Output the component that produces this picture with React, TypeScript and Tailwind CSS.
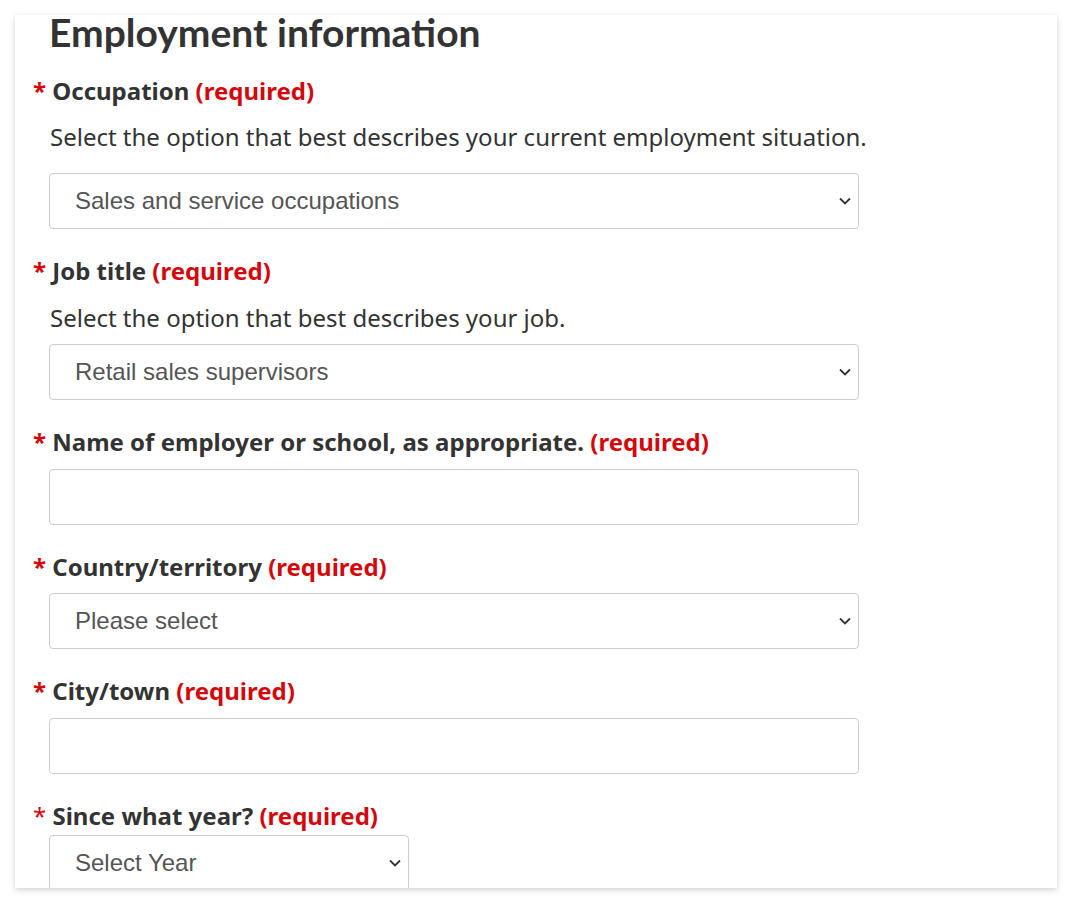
const Chevron = () => (
    <svg width="12" height="8" viewBox="0 0 12 8" className="pointer-events-none absolute right-[8px] top-[24px]">
        <path d="M1 1.5 L6 6.5 L11 1.5" fill="none" stroke="#333" strokeWidth="1.8" />
    </svg>
);

function Label({ text }: { text: string }) {
    return (
        <div className="-ml-[16px] text-[24px] leading-[32px] font-bold text-[#333]">
            <span className="text-[#d3080c]">*</span> {text}{' '}
            <span className="text-[#d3080c]">(required)</span>
        </div>
    );
}

function SelectBox({ value, width = 'w-[810px]' }: { value: string; width?: string }) {
    return (
        <div className={`relative ${width}`}>
            <select
                className="h-[56px] w-full appearance-none rounded-[4px] border border-[#ccc] bg-white pl-[25px] text-[24px] text-[#555]"
                style={{ fontFamily: '"Liberation Sans", Arial, sans-serif' }}
                defaultValue={value}
            >
                <option>{value}</option>
            </select>
            <Chevron />
        </div>
    );
}

function TextBox() {
    return <input type="text" className="h-[56px] w-[810px] rounded-[4px] border border-[#ccc] bg-white" />;
}

export default function App() {
    return (
        <div className="min-h-[903px] bg-white pt-[15px]" style={{ fontFamily: '"Noto Sans", "Open Sans", sans-serif' }}>
            <div className="mx-[15px] w-[1042px] bg-white pl-[34px] shadow-[0_2px_6px_rgba(0,0,0,0.18)]">
                <h2
                    className="text-[39px] leading-[34px] font-bold text-[#333]"
                    style={{ fontFamily: 'Lato, sans-serif' }}
                >
                    Employment information
                </h2>

                <div className="mt-[26px]">
                    <Label text="Occupation" />
                    <p className="mt-[14px] ml-px text-[24px] leading-[32px] text-[#333]">
                        Select the option that best describes your current employment situation.
                    </p>
                    <div className="mt-[20px]">
                        <SelectBox value="Sales and service occupations" />
                    </div>
                </div>

                <div className="mt-[26px]">
                    <Label text="Job title" />
                    <p className="mt-[15px] ml-px text-[24px] leading-[32px] text-[#333]">
                        Select the option that best describes your job.
                    </p>
                    <div className="mt-[10px]">
                        <SelectBox value="Retail sales supervisors" />
                    </div>
                </div>

                <div className="mt-[26px]">
                    <Label text="Name of employer or school, as appropriate." />
                    <div className="mt-[11px]">
                        <TextBox />
                    </div>
                </div>

                <div className="mt-[26px]">
                    <Label text="Country/territory" />
                    <div className="mt-[10px]">
                        <SelectBox value="Please select" />
                    </div>
                </div>

                <div className="mt-[26px]">
                    <Label text="City/town" />
                    <div className="mt-[11px]">
                        <TextBox />
                    </div>
                </div>

                <div className="mt-[26px]">
                    <div className="-ml-[16px] text-[24px] leading-[32px] font-bold text-[#333]">
                        <span className="font-normal text-[#d3080c]">*</span> Since what year?{' '}
                        <span className="text-[#d3080c]">(required)</span>
                    </div>
                    <div className="mt-[3px] h-[53px] overflow-hidden">
                        <SelectBox value="Select Year" width="w-[360px]" />
                    </div>
                </div>
            </div>
        </div>
    );
}
